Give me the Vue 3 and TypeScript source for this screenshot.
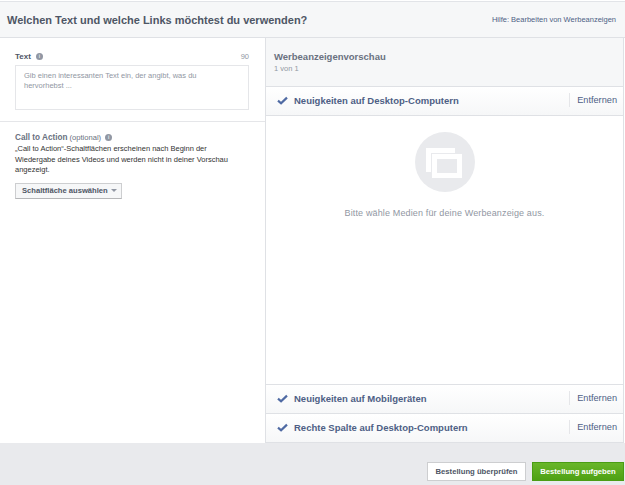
<script setup lang="ts">
const placements = [
  { name: 'Neuigkeiten auf Mobilgeräten' },
  { name: 'Rechte Spalte auf Desktop-Computern' },
]
</script>

<template>
  <div class="page">
    <header class="head">
      <h1>Welchen Text und welche Links möchtest du verwenden?</h1>
      <a class="help">Hilfe: Bearbeiten von Werbeanzeigen</a>
    </header>
    <main class="body">
      <section class="left">
        <div class="text-block">
          <div class="label-row">
            <span class="label">Text</span>
            <i class="info">i</i>
            <span class="count">90</span>
          </div>
          <div class="textarea">Gib einen interessanten Text ein, der angibt, was du<br />hervorhebst ...</div>
        </div>
        <div class="cta-block">
          <div class="cta-title">
            <span class="label-cta">Call to Action</span>
            <span class="optional">(optional)</span>
            <i class="info">i</i>
          </div>
          <p>„Call to Action“-Schaltflächen erscheinen nach Beginn der Wiedergabe deines Videos und werden nicht in deiner Vorschau angezeigt.</p>
          <button class="select">Schaltfläche auswählen<span class="caret"></span></button>
        </div>
      </section>
      <section class="right">
        <div class="preview-head">
          <div class="preview-title">Werbeanzeigenvorschau</div>
          <div class="preview-sub">1 von 1</div>
        </div>
        <div class="row">
          <svg class="check" viewBox="0 0 12 10"><path d="M1 5.2 4.4 8.2 11 1.8" fill="none" stroke="#4f6aa3" stroke-width="2.4" /></svg>
          <span class="row-name">Neuigkeiten auf Desktop-Computern</span>
          <span class="remove">Entfernen</span>
        </div>
        <div class="empty">
          <div class="circle">
            <span class="back"></span>
            <span class="front"></span>
          </div>
          <div class="empty-text">Bitte wähle Medien für deine Werbeanzeige aus.</div>
        </div>
        <div v-for="p in placements" :key="p.name" class="row">
          <svg class="check" viewBox="0 0 12 10"><path d="M1 5.2 4.4 8.2 11 1.8" fill="none" stroke="#4f6aa3" stroke-width="2.4" /></svg>
          <span class="row-name">{{ p.name }}</span>
          <span class="remove">Entfernen</span>
        </div>
      </section>
    </main>
    <footer class="foot">
      <button class="btn review">Bestellung überprüfen</button>
      <button class="btn order">Bestellung aufgeben</button>
    </footer>
  </div>
</template>

<style>
html, body { margin: 0; background: #fff; }
</style>

<style scoped>
.page {
  width: 625px;
  height: 485px;
  display: flex;
  flex-direction: column;
  font-family: "Liberation Sans", Arial, sans-serif;
  font-size: 9px;
  color: #4e5665;
  overflow: hidden;
  box-sizing: border-box;
  padding-top: 1px;
}
.head {
  height: 37px;
  flex: none;
  box-sizing: border-box;
  border-top: 1px solid #e2e4e8;
  border-bottom: 1px solid #dfe1e5;
  background: #f6f7f8;
  display: flex;
  align-items: center;
  justify-content: space-between;
  padding: 0 9px 0 7px;
}
h1 {
  margin: 0;
  font-size: 11px;
  font-weight: 700;
  color: #4e5665;
}
.help { font-size: 7.5px; color: #4e5f85; }
.body { flex: none; height: 405px; display: flex; }
.left { width: 266px; flex: none; box-sizing: border-box; border-right: 1px solid #dfe1e5; }
.text-block { height: 84px; box-sizing: border-box; padding: 13px 16px 0 15px; border-bottom: 1px solid #e5e6e9; }
.label-row { display: flex; align-items: center; height: 11px; }
.label { font-size: 8px; font-weight: 700; color: #4e5665; }
.info {
  width: 7px; height: 7px; margin-left: 5px; border-radius: 50%;
  background: #9197a3; color: #fff; font-size: 6px; line-height: 7px; text-align: center;
  font-style: normal; display: inline-block;
}
.count { margin-left: auto; color: #9197a3; font-size: 7.5px; }
.textarea {
  margin-top: 3px; height: 45px; box-sizing: border-box; padding: 5px 8px;
  border: 1px solid #e5e6e9; color: #9197a3; font-size: 7.5px; line-height: 10px; width: 234px;
}
.cta-block { padding: 10px 15px 0; }
.cta-title { display: flex; align-items: center; height: 11px; gap: 2px; }
.cta-title .info { margin-left: 2px; }
.label-cta { font-weight: 700; color: #6a7180; font-size: 8.2px; }
.optional { color: #6a7180; font-size: 7.6px; }
p { margin: 1px 0 0; width: 225px; font-size: 7.5px; line-height: 10.5px; color: #333; }
.select {
  display: flex; align-items: center; margin-top: 7px; height: 16px; width: 107px; box-sizing: border-box;
  border: 1px solid #cdced0; background: #f6f7f8; padding: 0 6px; color: #4e5665; white-space: nowrap;
  font: 700 7.6px "Liberation Sans", Arial, sans-serif; border-bottom-color: #b5b6b8;
}
.caret {
  margin-left: 3px; width: 0; height: 0; border: 3px solid transparent; border-top: 3px solid #9197a3; border-bottom: 0;
}
.right { width: 358px; flex: none; display: flex; flex-direction: column; box-sizing: border-box; border-right: 1px solid #dfe1e5; }
.preview-head { height: 49px; flex: none; box-sizing: border-box; padding: 13px 8px 0; background: #f6f7f8; border-bottom: 1px solid #dfe1e5; }
.preview-title { font-size: 9.5px; font-weight: 700; color: #6a7180; line-height: 11px; }
.preview-sub { margin-top: 2px; font-size: 7.5px; color: #9197a3; line-height: 9px; }
.row {
  height: 29px; flex: none; box-sizing: border-box; display: flex; align-items: center;
  padding: 0 6px 2px 11px; background: linear-gradient(#fff, #f6f7f8); border-bottom: 1px solid #dfe1e5;
}
.check { width: 11px; height: 9px; }
.row-name { margin-left: 6px; font-size: 9.5px; font-weight: 700; color: #4e5f85; }
.remove { margin-left: auto; border-left: 1px solid #e5e6e9; padding-left: 7px; line-height: 14px; font-size: 9.2px; color: #4e5f85; }
.empty { flex: 1; display: flex; flex-direction: column; align-items: center; background: #fff; border-bottom: 1px solid #dfe1e5; }
.circle { position: relative; margin-top: 16px; width: 60px; height: 60px; border-radius: 50%; background: #e9eaed; }
.back { position: absolute; left: 11px; top: 16px; width: 29px; height: 24px; background: #fff; }
.front { position: absolute; left: 17px; top: 22px; width: 30px; height: 24px; box-sizing: border-box; background: #e9eaed; border: 5px solid #fff; box-shadow: 0 0 0 1px #e9eaed; }
.empty-text { margin-top: 16px; font-size: 9px; letter-spacing: 0.14px; color: #9197a3; }
.foot { flex: 1; background: #e9eaed; display: flex; justify-content: flex-end; align-items: flex-start; gap: 6px; padding: 19px 1px 0 0; }
.btn { height: 19px; box-sizing: border-box; font: 700 7.7px "Liberation Sans", Arial, sans-serif; padding: 0; }
.review { width: 99px; border: 1px solid #cdced0; background: #fff; color: #4e5665; }
.order { width: 92px; border: 1px solid #4a9d14; background: linear-gradient(#69b62a, #4ea114); color: #fff; }
</style>
